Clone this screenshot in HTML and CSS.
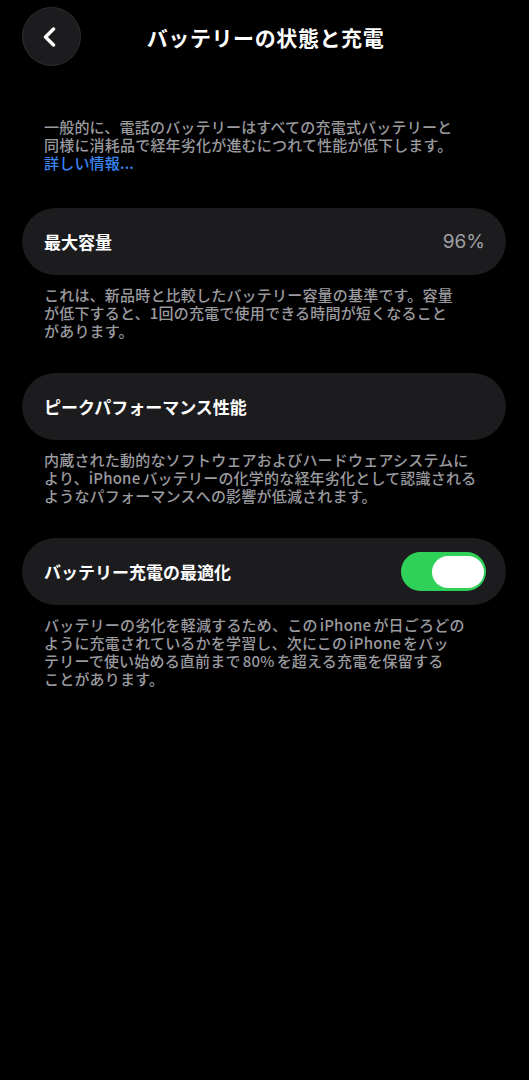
FILE: index.html
```html
<!DOCTYPE html>
<html lang="ja">
<head>
<meta charset="utf-8">
<link rel="stylesheet" href="styles.css">
</head>
<body>
<div class="screen">
  <header class="nav">
    <div class="back">
      <svg width="16" height="20" viewBox="0 0 16 20"><path d="M11.5 2 L3.5 10 L11.5 18" fill="none" stroke="#fff" stroke-width="3.4" stroke-linecap="round" stroke-linejoin="round"/></svg>
    </div>
    <h1 class="title">バッテリーの状態と充電</h1>
  </header>

  <div class="note intro">
    <div class="ln">一般的に、電話のバッテリーはすべての充電式バッテリーと</div>
    <div class="ln">同様に消耗品で経年劣化が進むにつれて性能が低下します。</div>
    <div class="ln link">詳しい情報...</div>
  </div>

  <div class="card">
    <span class="label">最大容量</span>
    <span class="value">96%</span>
  </div>
  <div class="note">
    <div class="ln">これは、新品時と比較したバッテリー容量の基準です。容量</div>
    <div class="ln">が低下すると、1回の充電で使用できる時間が短くなること</div>
    <div class="ln">があります。</div>
  </div>

  <div class="card">
    <span class="label">ピークパフォーマンス性能</span>
  </div>
  <div class="note">
    <div class="ln">内蔵された動的なソフトウェアおよびハードウェアシステムに</div>
    <div class="ln">より、iPhone バッテリーの化学的な経年劣化として認識される</div>
    <div class="ln">ようなパフォーマンスへの影響が低減されます。</div>
  </div>

  <div class="card">
    <span class="label">バッテリー充電の最適化</span>
    <div class="toggle"><div class="thumb"></div></div>
  </div>
  <div class="note">
    <div class="ln">バッテリーの劣化を軽減するため、この iPhone が日ごろどの</div>
    <div class="ln">ように充電されているかを学習し、次にこの iPhone をバッ</div>
    <div class="ln">テリーで使い始める直前まで 80% を超える充電を保留する</div>
    <div class="ln">ことがあります。</div>
  </div>
</div>
</body>
</html>
```

FILE: styles.css
```css
html, body {
  margin: 0;
  padding: 0;
  background: #000;
}
body {
  font-family: "Noto Sans CJK JP", "Noto Sans", sans-serif;
  color: #fff;
}
.screen {
  width: 529px;
  min-height: 1080px;
  background: #000;
}
.nav {
  position: relative;
  height: 74px;
  display: flex;
  align-items: center;
  justify-content: center;
}
.back {
  position: absolute;
  left: 22px;
  top: 7px;
  width: 57px;
  height: 57px;
  border-radius: 50%;
  background: #1c1c1e;
  border: 1px solid #2e2e30;
  display: flex;
  align-items: center;
  justify-content: center;
}
.back svg {
  margin-left: -3px;
}
.title {
  margin: 0;
  margin-top: 1px;
  margin-left: 2px;
  font-size: 21px;
  font-weight: 700;
  letter-spacing: 0.6px;
  line-height: 1;
}
.note {
  margin: 0 10px 0 44px;
  font-size: 15px;
  font-weight: 500;
  letter-spacing: 0.2px;
  word-spacing: -1.5px;
  color: #9a9a9f;
  white-space: nowrap;
}
.ln {
  height: 18px;
  line-height: 18px;
}
.intro {
  margin-top: 44px;
  margin-bottom: 36px;
}
.link {
  color: #3a86f5;
}
.card {
  margin: 0 23px 11px 22px;
  height: 67px;
  border-radius: 34px;
  background: #1c1c1e;
  display: flex;
  align-items: center;
  justify-content: space-between;
  padding: 0 21px 0 22px;
}
.card + .note {
  margin-bottom: 33px;
}
.label {
  font-size: 17px;
  font-weight: 700;
  color: #fff;
}
.value {
  font-family: "Inter", "Noto Sans", sans-serif;
  font-size: 19px;
  color: #a0a0a5;
}
.toggle {
  width: 85px;
  height: 39px;
  border-radius: 20px;
  background: #30d158;
  display: flex;
  align-items: center;
  justify-content: flex-end;
  padding-right: 2px;
  box-sizing: border-box;
  margin-right: -1px;
}
.thumb {
  width: 52px;
  height: 32px;
  border-radius: 16px;
  background: #fff;
}
```
